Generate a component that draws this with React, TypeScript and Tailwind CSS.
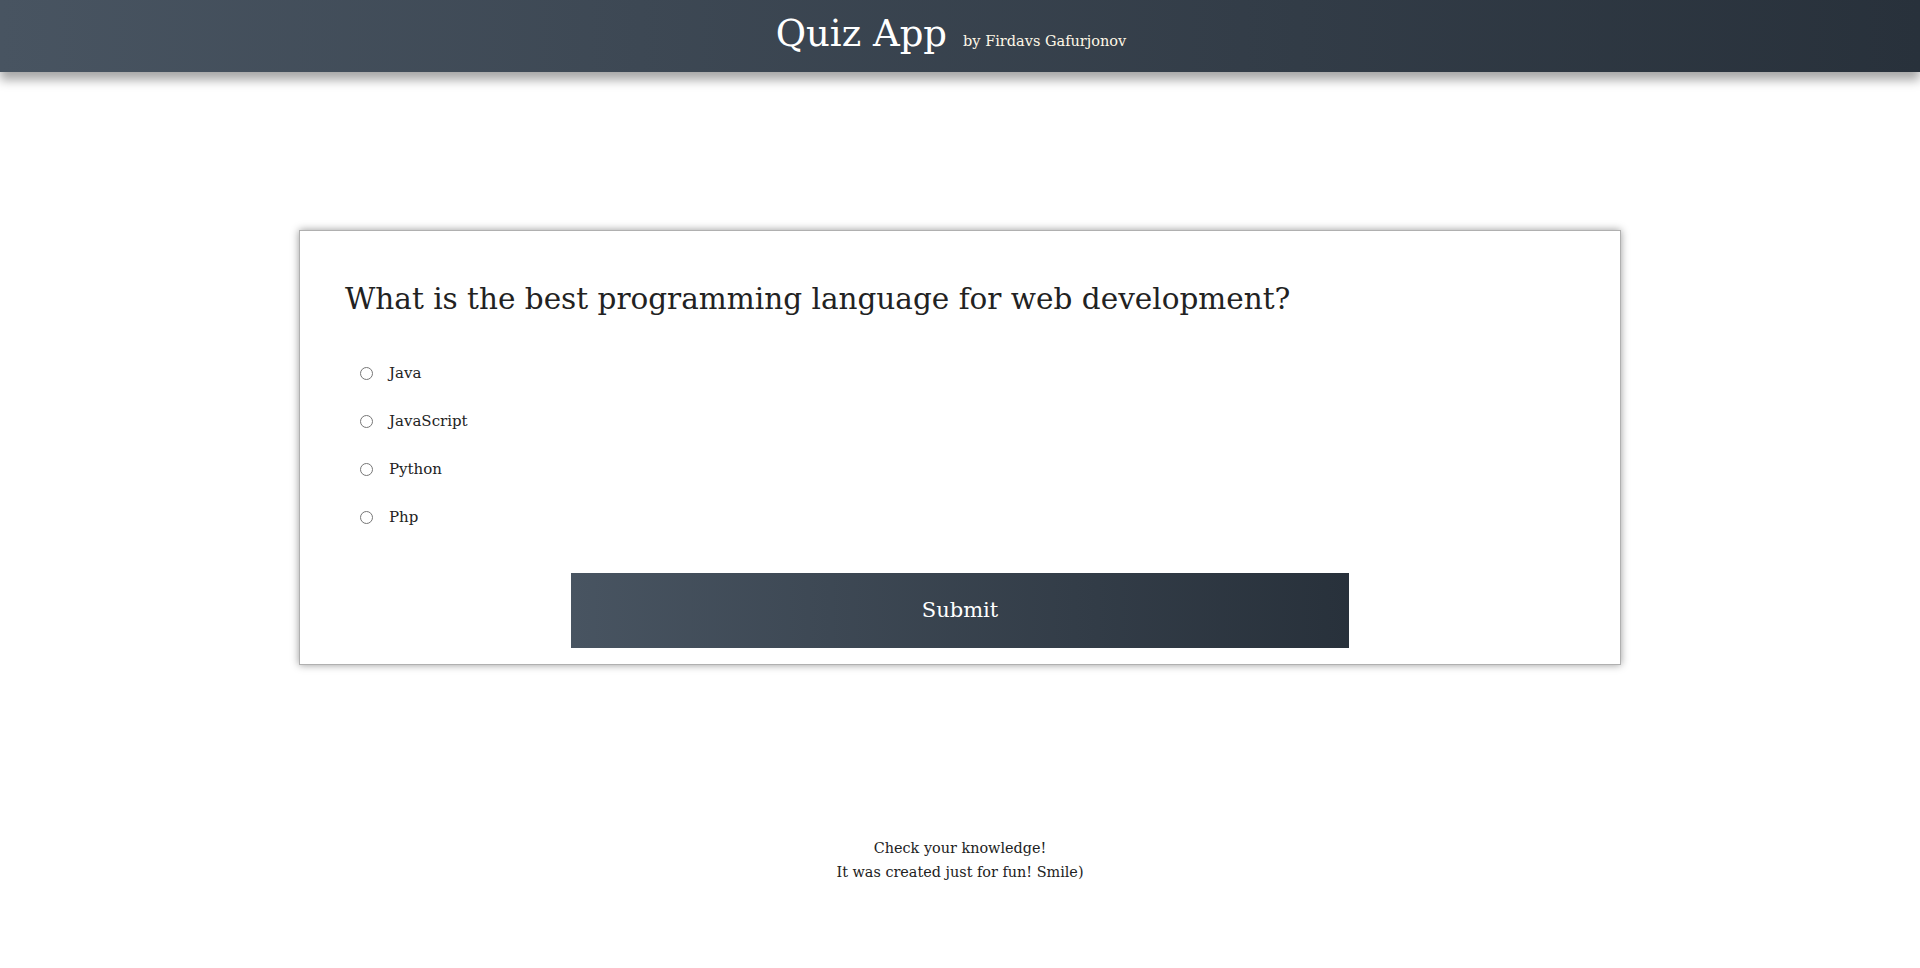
const OPTIONS = ['Java', 'JavaScript', 'Python', 'Php']

const FONT = 'font-["DejaVu_Serif","Liberation_Serif",serif]'

export default function App() {
  return (
    <div className={`min-h-screen bg-white text-[#222] ${FONT}`}>
      <header className="relative z-10 flex h-[72px] items-baseline justify-center gap-[16px] bg-gradient-to-r from-[#485461] to-[#28313b] pr-[18px] pt-[6px] shadow-[0_8px_10px_rgba(0,0,0,0.35)]">
        <h1 className="text-[37px] leading-[56px] text-white">Quiz App</h1>
        <span className="text-[14.5px] text-[#fff8e7]">by Firdavs Gafurjonov</span>
      </header>

      <main className="flex flex-col items-center">
        <form
          className="mt-[158px] w-[1322px] border border-[#b0b0b0] bg-white px-[45px] pb-[16px] pt-[48px] shadow-[0_0_8px_rgba(0,0,0,0.4)]"
          onSubmit={(e) => e.preventDefault()}
        >
          <h2 className="text-[29.5px] leading-[40px]">What is the best programming language for web development?</h2>
          <ul className="mt-[30px]">
            {OPTIONS.map((opt) => (
              <li key={opt} className="flex h-[48px] items-center pl-[15px]">
                <input type="radio" name="answer" id={opt} className="m-0 h-[13px] w-[13px]" />
                <label htmlFor={opt} className="ml-[16px] text-[15px]">
                  {opt}
                </label>
              </li>
            ))}
          </ul>
          <button
            type="submit"
            className="mx-auto mt-[32px] block h-[75px] w-[778px] bg-gradient-to-r from-[#485461] to-[#28313b] text-[21px] text-white"
          >
            Submit
          </button>
        </form>

        <footer className="mt-[171px] text-center text-[14.4px] leading-[24px]">
          <p>Check your knowledge!</p>
          <p>It was created just for fun! Smile)</p>
        </footer>
      </main>
    </div>
  )
}
